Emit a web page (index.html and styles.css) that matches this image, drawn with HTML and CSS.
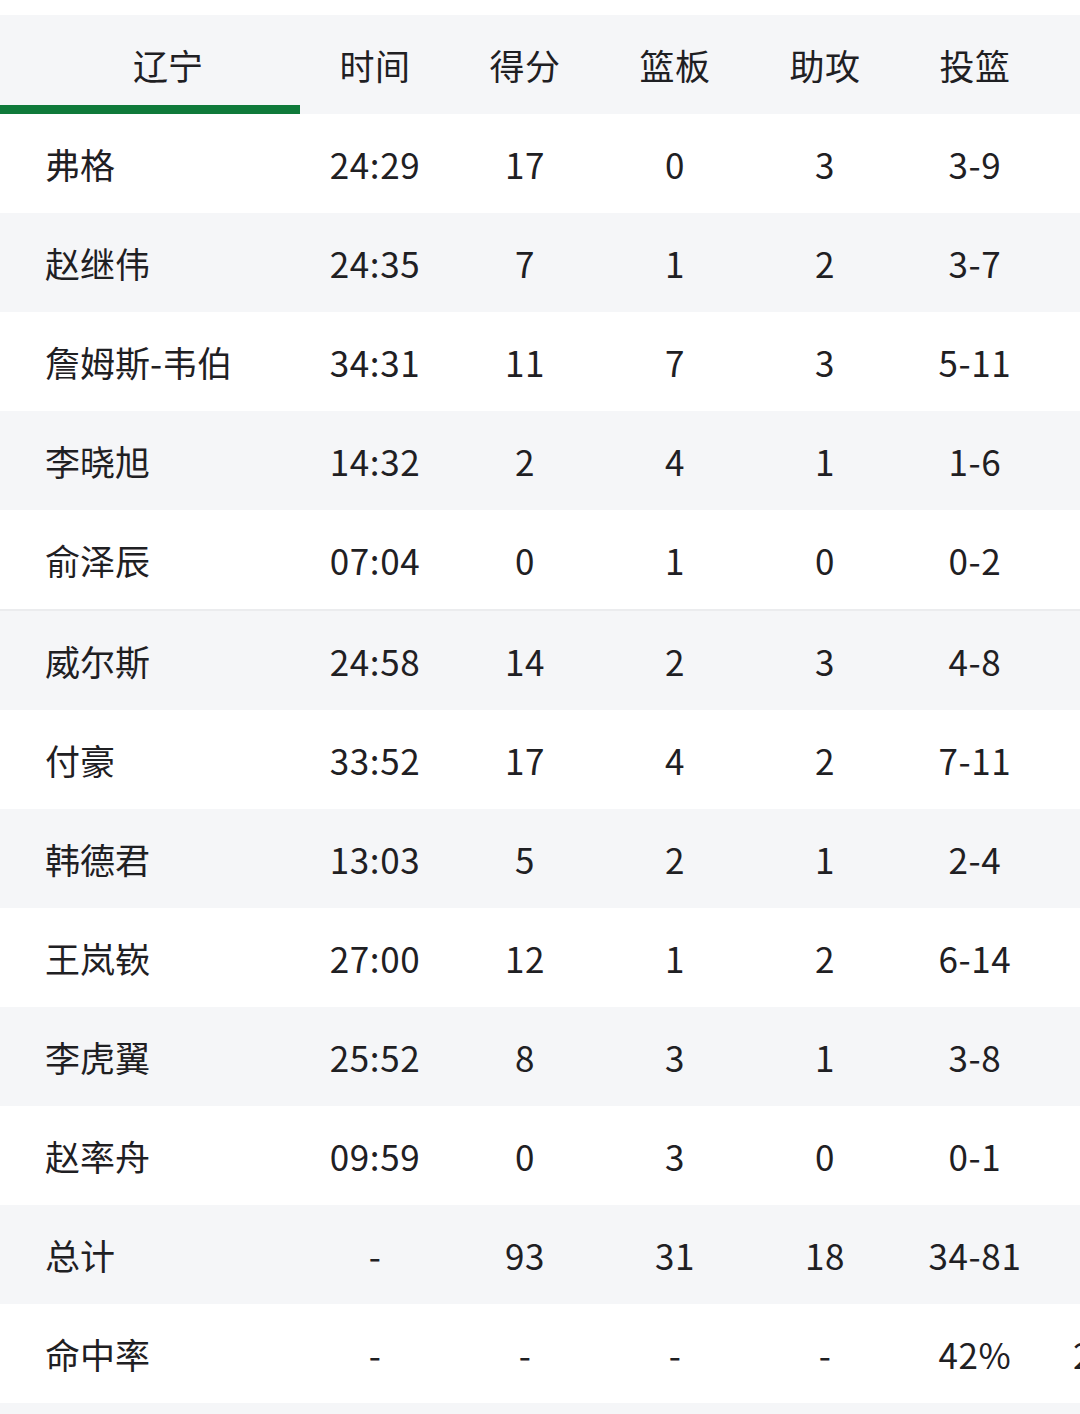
FILE: index.html
```html
<!DOCTYPE html>
<html lang="zh">
<head>
<meta charset="utf-8">
<link rel="stylesheet" href="styles.css">
</head>
<body>
<div class="page">
  <div class="table">
    <div class="row head">
      <div class="cell name tab">辽宁</div>
      <div class="cell">时间</div>
      <div class="cell">得分</div>
      <div class="cell">篮板</div>
      <div class="cell">助攻</div>
      <div class="cell">投篮</div>
      <div class="cell extra"></div>
    </div>
    <div class="row w"><div class="cell name">弗格</div><div class="cell">24:29</div><div class="cell">17</div><div class="cell">0</div><div class="cell">3</div><div class="cell">3-9</div><div class="cell extra"></div></div>
    <div class="row g"><div class="cell name">赵继伟</div><div class="cell">24:35</div><div class="cell">7</div><div class="cell">1</div><div class="cell">2</div><div class="cell">3-7</div><div class="cell extra"></div></div>
    <div class="row w"><div class="cell name">詹姆斯-韦伯</div><div class="cell">34:31</div><div class="cell">11</div><div class="cell">7</div><div class="cell">3</div><div class="cell">5-11</div><div class="cell extra"></div></div>
    <div class="row g"><div class="cell name">李晓旭</div><div class="cell">14:32</div><div class="cell">2</div><div class="cell">4</div><div class="cell">1</div><div class="cell">1-6</div><div class="cell extra"></div></div>
    <div class="row w"><div class="cell name">俞泽辰</div><div class="cell">07:04</div><div class="cell">0</div><div class="cell">1</div><div class="cell">0</div><div class="cell">0-2</div><div class="cell extra"></div></div>
    <div class="row g sep"><div class="cell name">威尔斯</div><div class="cell">24:58</div><div class="cell">14</div><div class="cell">2</div><div class="cell">3</div><div class="cell">4-8</div><div class="cell extra"></div></div>
    <div class="row w"><div class="cell name">付豪</div><div class="cell">33:52</div><div class="cell">17</div><div class="cell">4</div><div class="cell">2</div><div class="cell">7-11</div><div class="cell extra"></div></div>
    <div class="row g"><div class="cell name">韩德君</div><div class="cell">13:03</div><div class="cell">5</div><div class="cell">2</div><div class="cell">1</div><div class="cell">2-4</div><div class="cell extra"></div></div>
    <div class="row w"><div class="cell name">王岚嵚</div><div class="cell">27:00</div><div class="cell">12</div><div class="cell">1</div><div class="cell">2</div><div class="cell">6-14</div><div class="cell extra"></div></div>
    <div class="row g"><div class="cell name">李虎翼</div><div class="cell">25:52</div><div class="cell">8</div><div class="cell">3</div><div class="cell">1</div><div class="cell">3-8</div><div class="cell extra"></div></div>
    <div class="row w"><div class="cell name">赵率舟</div><div class="cell">09:59</div><div class="cell">0</div><div class="cell">3</div><div class="cell">0</div><div class="cell">0-1</div><div class="cell extra"></div></div>
    <div class="row g"><div class="cell name">总计</div><div class="cell">-</div><div class="cell">93</div><div class="cell">31</div><div class="cell">18</div><div class="cell">34-81</div><div class="cell extra"></div></div>
    <div class="row w"><div class="cell name">命中率</div><div class="cell">-</div><div class="cell">-</div><div class="cell">-</div><div class="cell">-</div><div class="cell">42%</div><div class="cell extra">2</div></div>
    <div class="row g filler"></div>
  </div>
</div>
</body>
</html>
```

FILE: styles.css
```css
html, body {
  margin: 0;
  padding: 0;
  background: #ffffff;
}
body {
  width: 1080px;
  height: 1414px;
  overflow: hidden;
  font-family: "Noto Sans CJK SC", "Noto Sans", sans-serif;
  color: #1f2023;
}
.page {
  padding-top: 15px;
}
.table {
  display: flex;
  flex-direction: column;
}
.row {
  display: grid;
  grid-template-columns: 300px 150px 150px 150px 150px 150px 150px;
  height: 99px;
  align-items: center;
  font-size: 35px;
  line-height: 1;
}
.row.w { background: #ffffff; }
.row.g { background: #f5f6f8; }
.row.sep {
  border-top: 2px solid #ebecee;
}
.row.filler { height: 12px; }
.head {
  background: #f5f6f8;
  height: 99px;
}
.cell {
  text-align: center;
  white-space: nowrap;
  letter-spacing: 0.6px;
}
.cell.name {
  text-align: left;
  padding-left: 45px;
  letter-spacing: 0;
}
.cell.tab {
  padding-left: 133px;
  align-self: stretch;
  display: flex;
  align-items: center;
  border-bottom: 9px solid #0f7a3a;
  padding-top: 9px;
  box-sizing: border-box;
}
.cell.extra {
  text-align: left;
  padding-left: 23px;
}
```
